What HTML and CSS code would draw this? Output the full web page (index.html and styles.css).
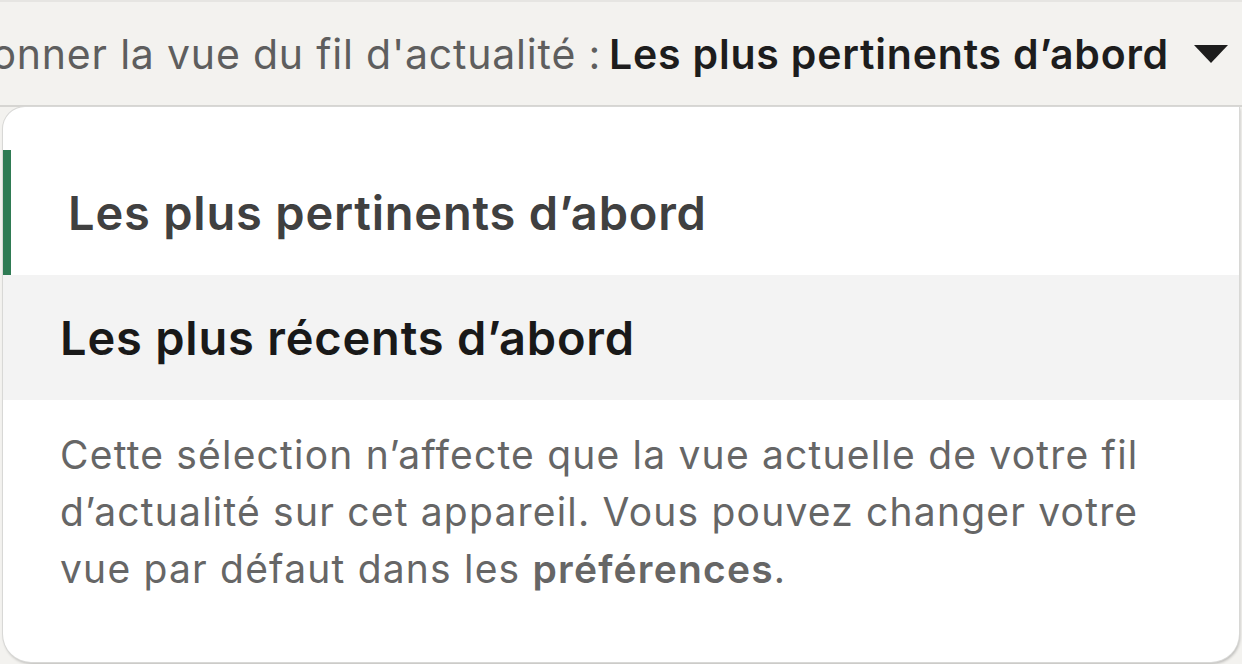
FILE: index.html
```html
<!doctype html>
<html lang="fr">
<head>
<title>Fil d’actualité</title>
<link rel="stylesheet" href="styles.css">
</head>
<body>
<div class="sortbar">
  <span class="sortbar-label">Sélectionner la vue du fil d'actualité :</span>
  <span class="sortbar-value">Les plus pertinents d’abord</span>
  <svg class="caret" width="34" height="18" viewBox="0 0 34 18"><path d="M0 0 L34 0 L17 18 Z" fill="#1d1d1d"/></svg>
</div>
<div class="feed"></div>
<div class="menu">
  <div class="menu-item menu-item--active">Les plus pertinents d’abord</div>
  <div class="menu-item menu-item--hover">Les plus récents d’abord</div>
  <p class="menu-note">Cette sélection n’affecte que la vue actuelle de votre fil d’actualité sur cet appareil. Vous pouvez changer votre vue par défaut dans les <b>préférences</b>.</p>
</div>
</body>
</html>
```

FILE: styles.css
```css
html, body {
  margin: 0;
  height: 100%;
  overflow: hidden;
}
body {
  font-family: Inter, "Noto Sans", sans-serif;
  background: #f3f2ef;
  position: relative;
}
.sortbar {
  height: 103px;
  border-top: 2px solid #e6e5e2;
  display: flex;
  align-items: center;
  justify-content: flex-end;
  white-space: nowrap;
  overflow: hidden;
  padding-right: 14px;
  font-size: 41px;
  letter-spacing: 0.8px;
}
.sortbar-label { color: #5e5e5e; }
.sortbar-value {
  color: #1d1d1d;
  font-weight: 600;
  margin-left: 8px;
}
.caret {
  margin-left: 25px;
  flex: none;
}
.feed {
  border-top: 2px solid #d6d5d2;
}
.menu {
  position: absolute;
  top: 107px;
  left: 3px;
  width: 1236px;
  height: 555px;
  background: #fff;
  border-radius: 22px 0 28px 28px;
  box-shadow: 0 0 0 1px #d8d8d6, 1px 2px 3px rgba(0,0,0,0.25);
  padding-top: 43px;
  box-sizing: border-box;
}
.menu-item {
  height: 125px;
  display: flex;
  align-items: center;
  padding-left: 57px;
  font-size: 47px;
  font-weight: 600;
  letter-spacing: 0.8px;
  color: #191919;
}
.menu-item--active {
  border-left: 8px solid #2f7b54;
  color: #404040;
}
.menu-item--hover { background: #f3f3f3; }
.menu-note {
  margin: 0;
  padding: 26px 80px 0 57px;
  font-size: 39px;
  line-height: 57px;
  letter-spacing: 1.2px;
  color: #666;
}
.menu-note b { font-weight: 600; }
```
